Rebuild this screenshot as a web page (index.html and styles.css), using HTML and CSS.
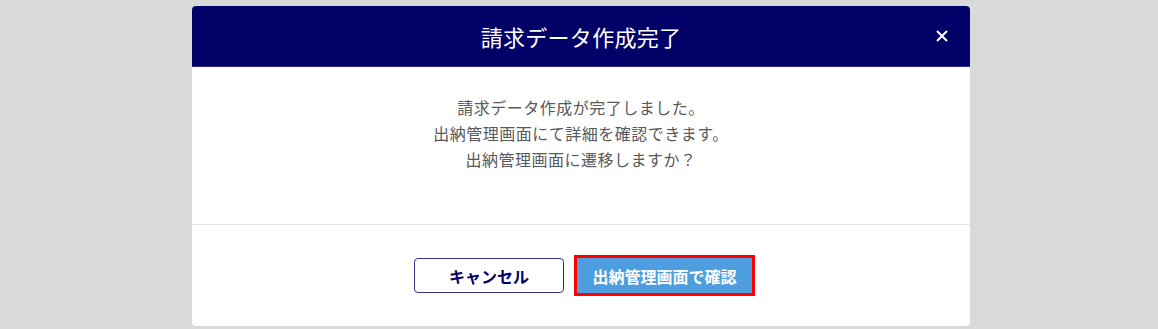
FILE: index.html
```html
<!DOCTYPE html>
<html lang="ja">
<head>
<meta charset="utf-8">
<title>請求データ作成完了</title>
<link rel="stylesheet" href="styles.css">
</head>
<body>
<div class="modal">
  <div class="modal-header">
    <h1 class="modal-title">請求データ作成完了</h1>
    <button class="close-btn" aria-label="閉じる">
      <svg width="12" height="12" viewBox="0 0 12 12"><path d="M1 1L11 11M11 1L1 11" stroke="#fff" stroke-width="2" fill="none"/></svg>
    </button>
  </div>
  <div class="modal-body">
    <p class="message">請求データ作成が完了しました。<br>出納管理画面にて詳細を確認できます。<br>出納管理画面に遷移しますか？</p>
  </div>
  <div class="modal-footer">
    <button class="btn btn-cancel">キャンセル</button>
    <button class="btn btn-confirm">出納管理画面で確認</button>
  </div>
</div>
</body>
</html>
```
FILE: styles.css
```css
html, body {
  margin: 0;
  padding: 0;
  background: #d9d9d9;
  font-family: "Noto Sans CJK JP", "Noto Sans", sans-serif;
}
body {
  height: 329px;
  overflow: hidden;
}
.modal {
  width: 778px;
  margin: 6px 0 0 192px;
  background: #fff;
  border-radius: 4px;
  overflow: hidden;
}
.modal-header {
  position: relative;
  height: 60px;
  background: #000066;
  border-bottom: 1px solid #2b2b86;
  display: flex;
  align-items: center;
  justify-content: center;
}
.modal-title {
  margin: 0;
  color: #fff;
  font-size: 22px;
  font-weight: 400;
  line-height: 1;
  letter-spacing: 0.3px;
}
.close-btn {
  position: absolute;
  right: 21px;
  top: 23px;
  width: 14px;
  height: 14px;
  padding: 0;
  border: 0;
  background: transparent;
  display: flex;
  align-items: center;
  justify-content: center;
}
.modal-body {
  padding: 27px 0 52px;
  border-bottom: 1px solid #e6e6e6;
}
.message {
  margin: 0;
  text-align: center;
  color: #595959;
  font-size: 16px;
  line-height: 26px;
  letter-spacing: 0.5px;
}
.modal-footer {
  height: 101px;
  display: flex;
  align-items: center;
  justify-content: center;
  gap: 13px;
  padding-left: 4px;
  box-sizing: border-box;
}
.btn {
  height: 35px;
  font-family: inherit;
  font-size: 16px;
  font-weight: 700;
  border-radius: 4px;
  padding: 0;
  line-height: 1;
}
.btn-cancel {
  width: 150px;
  background: #fff;
  color: #000066;
  border: 1px solid #33338a;
}
.btn-confirm {
  width: 175px;
  background: #4e9ddf;
  color: #fff;
  border: 0;
  border-radius: 0;
  outline: 3px solid #ff0000;
}
```
